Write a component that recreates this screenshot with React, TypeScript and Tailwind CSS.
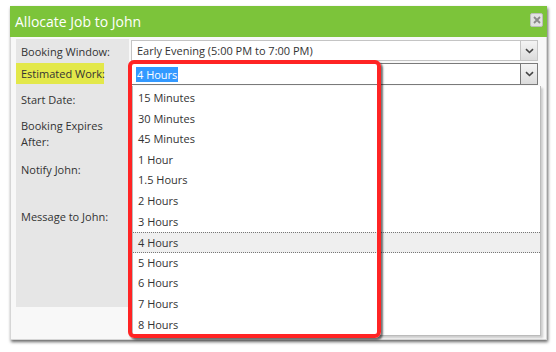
// Allocate job dialog with the "Estimated Work" select opened.
import React from "react";

const OPTIONS = [
  "15 Minutes",
  "30 Minutes",
  "45 Minutes",
  "1 Hour",
  "1.5 Hours",
  "2 Hours",
  "3 Hours",
  "4 Hours",
  "5 Hours",
  "6 Hours",
  "7 Hours",
  "8 Hours",
];

function Arrow({ dark }: { dark?: boolean }) {
  return (
    <div
      className={
        "w-[17px] h-full flex items-center justify-center bg-gradient-to-b from-[#f4f4f4] to-[#dcdcdc] border-l " +
        (dark ? "border-[#777]" : "border-[#c4c4c4]")
      }
    >
      <svg width="9" height="6" viewBox="0 0 9 6">
        <path d="M1 1.2 L4.5 4.5 L8 1.2" stroke="#444" strokeWidth="1.6" fill="none" />
      </svg>
    </div>
  );
}

export default function App() {
  return (
    <div className="w-[556px] h-[352px] bg-white pt-[6px] pl-[10px] font-['Open_Sans',sans-serif] text-[#333]">
      <div className="relative w-[537px] h-[334px] flex flex-col shadow-[1px_2px_3px_rgba(0,0,0,0.6)]">
        {/* Header */}
        <div className="h-[31px] bg-[#7cc43a] flex items-center justify-between pl-[5px] pr-[4px]">
          <span className="text-white text-[14px] leading-none">Allocate Job to John</span>
          <div className="w-[13px] h-[14px] rounded-[2px] bg-[#e2e2e2] border border-[#bdbdbd] flex items-center justify-center mb-[4px]">
            <svg width="8" height="8" viewBox="0 0 8 8">
              <path d="M1 1 L7 7 M7 1 L1 7" stroke="#8a8a8a" strokeWidth="1.8" />
            </svg>
          </div>
        </div>

        {/* Body */}
        <div className="flex-1 bg-[#f8f8f8] border-x border-b border-[#d6d6d6] pt-[2px] pl-[5px] pr-[6px]">
          <div className="flex h-[268px]">
            {/* Labels */}
            <div className="w-[113px] bg-[#e6e6e6] text-[11px] leading-[16px] flex flex-col whitespace-nowrap">
              <div className="h-[23px] pl-[5px] pt-[5px]">Booking Window:</div>
              <div className="h-[23px] pt-[1px]">
                <div className="w-[88px] h-[21px] bg-[#e3e84a] pl-[5px] pt-[3px]">Estimated Work:</div>
              </div>
              <div className="h-[25px] pl-[5px] pt-[7px]">Start Date:</div>
              <div className="h-[43px] pl-[5px] pt-[8px]">
                Booking Expires
                <br />
                After:
              </div>
              <div className="h-[47px] pl-[5px] pt-[9px]">Notify John:</div>
              <div className="pl-[5px] pt-[9px]">Message to John:</div>
            </div>

            {/* Fields */}
            <div className="flex-1 pl-[2px] pt-[1px] text-[11px]">
              <div className="h-[21px] w-[407px] bg-white border border-[#c4c4c4] flex items-stretch">
                <div className="flex-1 pl-[5px] leading-[19px]">Early Evening (5:00 PM to 7:00 PM)</div>
                <Arrow />
              </div>
              <div className="mt-[2px] h-[22px] w-[407px] bg-white border border-[#7a7a7a] flex items-stretch">
                <div className="flex-1 pl-[4px] flex items-center">
                  <span className="bg-[#3399ff] text-white leading-[15px] px-[1px]">4 Hours</span>
                </div>
                <Arrow dark />
              </div>
            </div>
          </div>
        </div>

        {/* Open list of the select */}
        <div className="absolute left-[122px] top-[80px] w-[409px] h-[250px] bg-white border border-[#bbb] border-t-0 shadow-[2px_2px_2px_rgba(0,0,0,0.18)] pt-[2px] text-[11px]">
          {OPTIONS.map((o) => (
            <div
              key={o}
              className={
                "h-[20.6px] pl-[5px] leading-[20px] " +
                (o === "4 Hours" ? "bg-[#efefef] border-y border-dotted border-[#777] leading-[18px]" : "")
              }
            >
              {o}
            </div>
          ))}
        </div>

        {/* Red call-out */}
        <div className="absolute left-[118px] top-[54px] w-[253px] h-[278px] border-[4px] border-[#ff2424] rounded-[6px] shadow-[2px_2px_2px_rgba(0,0,0,0.55)]" />
      </div>
    </div>
  );
}
